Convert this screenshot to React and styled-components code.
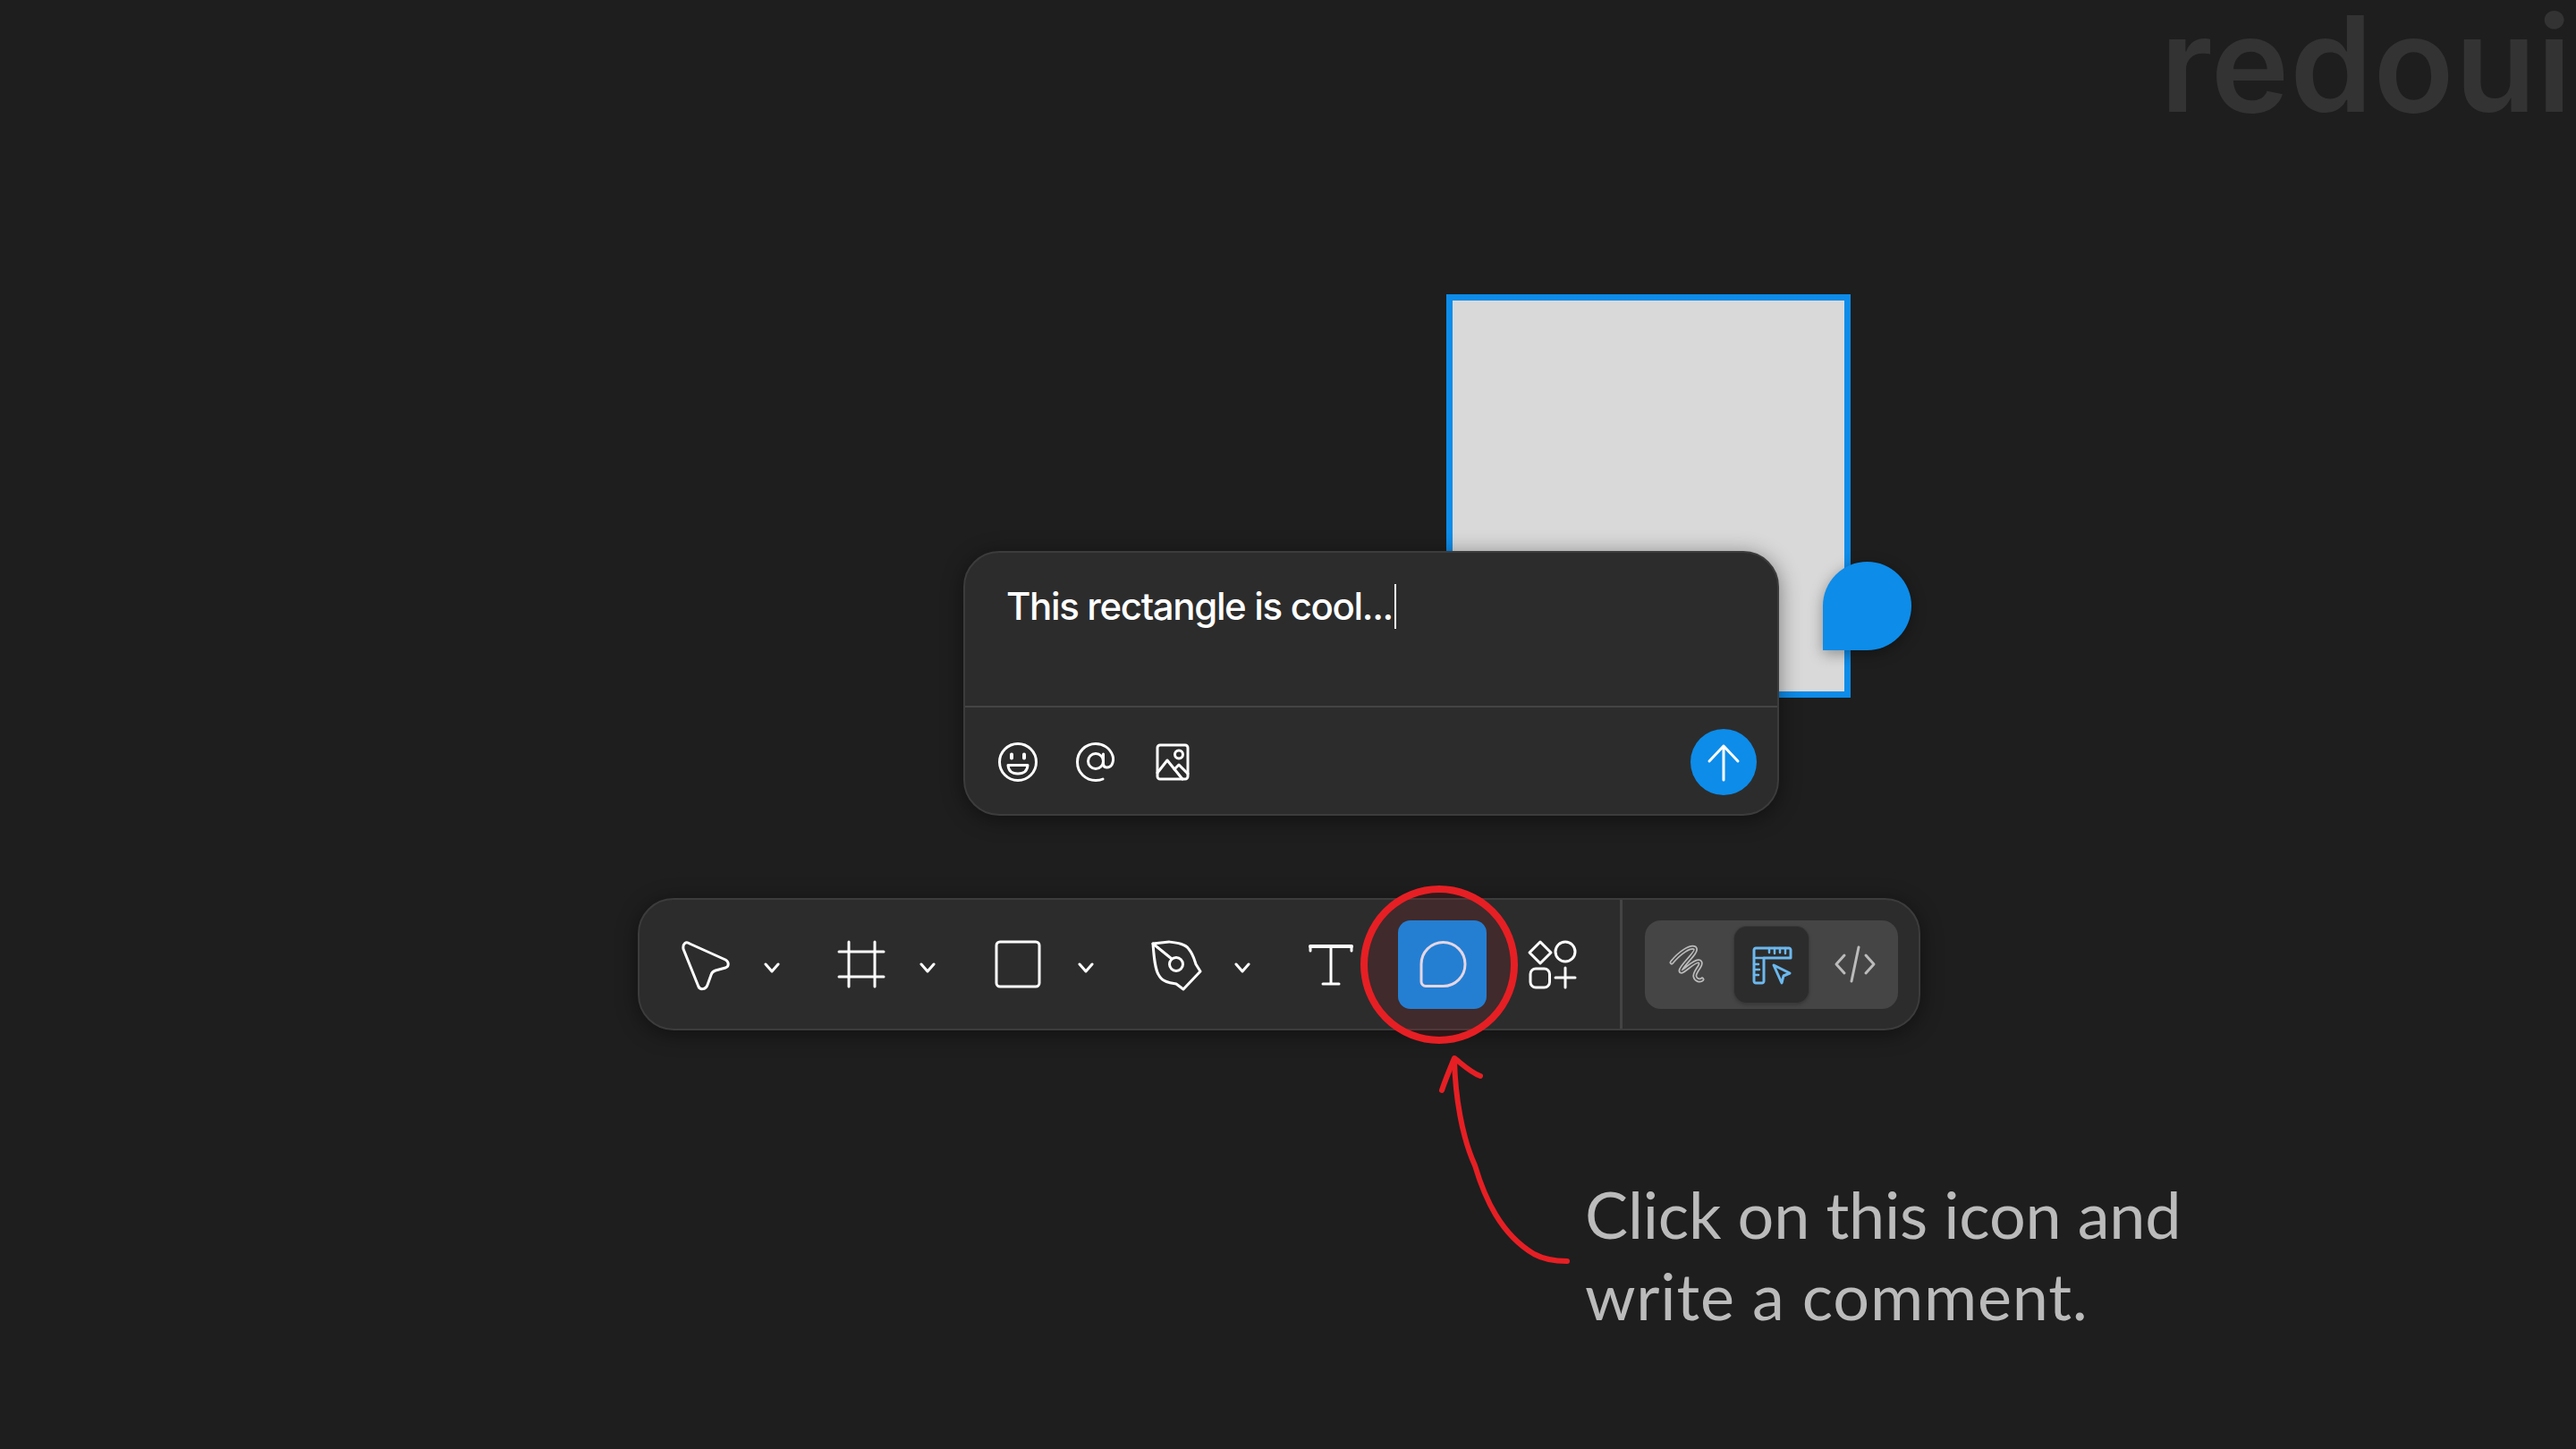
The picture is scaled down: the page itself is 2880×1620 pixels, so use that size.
import styled, { createGlobalStyle } from "styled-components"

const GlobalStyle = createGlobalStyle`
  html, body {
    margin: 0;
    padding: 0;
    background: #1e1e1e;
  }
`

const Page = styled.main`
  position: relative;
  width: 2880px;
  height: 1620px;
  overflow: hidden;
  padding-top: 329px;
  box-sizing: border-box;
  display: flex;
  flex-direction: column;
  align-items: flex-start;
  background: #1e1e1e;
`

const Watermark = styled.div`
  position: absolute;
  top: 2px;
  right: 4px;
  font-family: "Inter", sans-serif;
  font-weight: 600;
  font-size: 148px;
  line-height: 140px;
  letter-spacing: 1px;
  color: #333333;
`

const SelectedRect = styled.div`
  position: relative;
  box-sizing: border-box;
  margin-left: 1617px;
  width: 452px;
  height: 451px;
  background: #d9d9d9;
  border: 7px solid #0d8ce9;
`

const Pin = styled.div`
  position: absolute;
  left: 414px;
  top: 292px;
  width: 99px;
  height: 99px;
  background: #0d8ce9;
  border-radius: 50% 50% 50% 0;
  box-shadow: 0 4px 16px rgba(0, 0, 0, 0.35);
`

const CommentCard = styled.section`
  position: relative;
  box-sizing: border-box;
  margin-top: -164px;
  margin-left: 1077px;
  width: 912px;
  height: 296px;
  display: flex;
  flex-direction: column;
  background: #2c2c2c;
  border: 2px solid #3c3c3c;
  border-radius: 40px;
  box-shadow: 0 4px 24px rgba(0, 0, 0, 0.45);
`

const CommentBody = styled.div`
  height: 173px;
  box-sizing: border-box;
  padding: 35px 0 0 46px;
  display: flex;
  align-items: flex-start;
  border-bottom: 2px solid #444444;
`

const CommentText = styled.span`
  font-family: "Inter", sans-serif;
  font-weight: 500;
  font-size: 42px;
  line-height: 50px;
  letter-spacing: -1.35px;
  color: #ffffff;
`

const Caret = styled.span`
  width: 2px;
  height: 50px;
  margin-left: 2px;
  background: #ffffff;
`

const CommentFooter = styled.div`
  flex: 1;
  display: flex;
  align-items: center;
  padding: 3px 23px 0 35px;
  gap: 39px;
`

const Slot = styled.span`
  display: flex;
  width: 48px;
  height: 48px;
`

const SendButton = styled.button`
  margin-left: auto;
  width: 74px;
  height: 74px;
  padding: 0;
  border: 0;
  border-radius: 50%;
  background: #0d8ce9;
  display: flex;
  align-items: center;
  justify-content: center;
`

const Toolbar = styled.nav`
  position: relative;
  box-sizing: border-box;
  margin-top: 92px;
  margin-left: 713px;
  width: 1434px;
  height: 148px;
  padding-left: 43px;
  display: flex;
  align-items: center;
  background: #2c2c2c;
  border: 2px solid #3c3c3c;
  border-radius: 40px;
  box-shadow: 0 4px 24px rgba(0, 0, 0, 0.45);
`

const ToolGroup = styled.div`
  width: ${(p) => p.$w}px;
  flex: none;
  display: flex;
  align-items: center;
  gap: ${(p) => p.$gap || 36}px;
`

const ToolIcon = styled.span`
  width: 60px;
  height: 60px;
  flex: none;
  display: flex;
`

const ActiveTool = styled.button`
  width: 99px;
  height: 99px;
  padding: 0;
  margin-left: 46px;
  margin-right: 43px;
  border: 0;
  border-radius: 14px;
  background: #0d8ce9;
  display: flex;
  align-items: center;
  justify-content: center;
  flex: none;
`

const Divider = styled.div`
  align-self: stretch;
  width: 3px;
  flex: none;
  margin-left: 46px;
  background: #444444;
`

const ModeSwitch = styled.div`
  margin-left: 25px;
  box-sizing: border-box;
  width: 283px;
  height: 99px;
  padding: 7px;
  display: flex;
  gap: 10px;
  background: #454545;
  border-radius: 18px;
  flex: none;
`

const ModeItem = styled.div`
  width: 83px;
  border-radius: 14px;
  display: flex;
  align-items: center;
  justify-content: center;
  background: ${(p) => (p.$active ? "#2c2c2c" : "transparent")};
  box-shadow: ${(p) => (p.$active ? "0 0 0 1px #3a3a3a, 0 2px 4px rgba(0,0,0,.25)" : "none")};
`

const RedCircle = styled.svg`
  position: absolute;
  left: 799px;
  top: -23px;
  pointer-events: none;
`

const Hint = styled.section`
  margin-top: 23px;
  margin-left: 1600px;
  display: flex;
  align-items: flex-start;
`

const HintText = styled.p`
  margin: 137px 0 0 7px;
  font-family: "Lato", sans-serif;
  font-weight: 400;
  font-size: 72px;
  line-height: 91px;
  color: #bbbbbb;
  white-space: nowrap;
`

const HintLine = styled.span`
  display: block;
  letter-spacing: ${(p) => p.$spacing}px;
`

const Icon = ({ size = 60, color = "#fff", width = 3, children }) => (
  <svg
    width={size}
    height={size}
    viewBox={`0 0 ${size} ${size}`}
    fill="none"
    stroke={color}
    strokeWidth={width}
    strokeLinecap="round"
    strokeLinejoin="round"
  >
    {children}
  </svg>
)

const Chevron = () => (
  <svg width="18" height="14" viewBox="0 0 18 14" fill="none" stroke="#fff" strokeWidth="3" strokeLinecap="round" strokeLinejoin="round" style={{ marginTop: 8 }}>
    <path d="M2 3l7 8 7-8" />
  </svg>
)

const squiggle = "M11 28C20 17 32 9 37 12C41 16 22 31 21 37C21 43 37 24 42 27C47 30 35 39 37 44C38 48 43 49 45 47"

const tools = [
  {
    w: 175,
    gap: 36,
    icon: <path d="M6 13C5 7 9 4 13 7L53 25C57.500 27.500 57 33 53 34L42 37C39 38 37.500 40 37 42L33 53C31 59 24 59 22.500 54Z" />,
  },
  {
    w: 174,
    gap: 35,
    icon: (
      <>
        <path d="M16 5V55M45 5V55" />
        <path d="M5 16H55M5 44H55" />
      </>
    ),
  },
  {
    w: 178,
    gap: 38,
    icon: <rect x="7" y="5" width="48" height="50" rx="4" />,
  },
  {
    w: 172,
    gap: 35,
    icon: (
      <>
        <path d="M4 7L22 5C30 6 40 7 44 13C49 19 50 24 52 30L57 38L38 58L30 52C24 51 15 50 11 43C6 36 5 20 4 7Z" />
        <circle cx="30" cy="30" r="7.500" />
        <path d="M4 7L25 24" />
      </>
    ),
  },
]

const App = () => {
  return (
    <Page>
      <GlobalStyle />
      <Watermark>redoui</Watermark>

      <SelectedRect>
        <Pin />
      </SelectedRect>

      <CommentCard>
        <CommentBody>
          <CommentText>This rectangle is cool...</CommentText>
          <Caret />
        </CommentBody>
        <CommentFooter>
          <Slot>
            <Icon size={48} width={3}>
              <circle cx="24" cy="24" r="20.500" />
              <path d="M13 27.500H35C34.500 34 30 37 24 37C18 37 13.500 34 13 27.500Z" />
              <path d="M17 15.500V19.500M31 15.500V19.500" strokeWidth="4" />
            </Icon>
          </Slot>
          <Slot>
            <Icon size={48} width={3}>
              <circle cx="24" cy="23" r="8.500" />
              <path d="M32.500 15V26C32.500 31 39 31.500 42 27C44 23 44 20 43 17C40 8 32 3.500 24 3.500C12 3.500 3.500 13 3.500 24C3.500 36 13 44.500 24 44.500C27 44.500 30 44 32 43" />
            </Icon>
          </Slot>
          <Slot>
            <Icon size={48} width={3}>
              <rect x="6" y="5" width="34" height="38" rx="3" />
              <circle cx="30" cy="15.500" r="4.500" />
              <path d="M6 36L17 22L34 43" />
              <path d="M25 32L30 27L40 37" />
            </Icon>
          </Slot>
          <SendButton>
            <Icon size={48} width={3}>
              <path d="M24 44V6M8 23L24 6L40 23" />
            </Icon>
          </SendButton>
        </CommentFooter>
      </CommentCard>

      <Toolbar>
        {tools.map((tool) => (
          <ToolGroup key={tool.w} $w={tool.w} $gap={tool.gap}>
            <ToolIcon>
              <Icon>{tool.icon}</Icon>
            </ToolIcon>
            <Chevron />
          </ToolGroup>
        ))}
        <ToolIcon>
          <Icon>
            <path d="M8 15V10H54V15M31 10V52M22 52H40" />
            <path d="M8 10H54" strokeWidth="4" />
          </Icon>
        </ToolIcon>
        <ActiveTool>
          <Icon color="#e6eefa">
            <path d="M6 30A24.500 24.500 0 1 1 30.500 54.500H11A5 5 0 0 1 6 49.500Z" />
          </Icon>
        </ActiveTool>
        <ToolIcon>
          <Icon>
            <path d="M17 5L29 17L17 29L5 17Z" />
            <circle cx="45" cy="16" r="11" />
            <rect x="6" y="35" width="21.500" height="21" rx="6" />
            <path d="M45 34V56M34 45H56" />
          </Icon>
        </ToolIcon>
        <Divider />
        <ModeSwitch>
          <ModeItem>
            <Icon>
              <path d={squiggle} stroke="#bbbbbb" strokeWidth="5" />
              <path d={squiggle} stroke="#454545" strokeWidth="1.500" />
            </Icon>
          </ModeItem>
          <ModeItem $active>
            <Icon color="#6cb8ee">
              <path d="M10 14C10 13 11 12 12 12H49C50 12 51 13 51 14V23H21V49C21 50 20 51 19 51H12C11 51 10 50 10 49Z" />
              <path d="M21 23L10 23M27 12V17M33 12V18M39 12V17M45 12V18M10 30H15M10 36H16M10 42H15" strokeWidth="2.500" />
              <path d="M32 31L50 40L43 43L41 51Z" />
            </Icon>
          </ModeItem>
          <ModeItem>
            <Icon color="#bbbbbb">
              <path d="M18 20L9 30L18 40M42 20L51 30L42 40M34 11L26 49" />
            </Icon>
          </ModeItem>
        </ModeSwitch>
        <RedCircle width="190" height="190" viewBox="0 0 190 190">
          <ellipse cx="95" cy="95.500" rx="84" ry="84.500" fill="rgba(230, 30, 35, 0.11)" stroke="#e61f24" strokeWidth="8" />
        </RedCircle>
      </Toolbar>

      <Hint>
        <svg width="165" height="245" viewBox="0 0 165 245" fill="none" stroke="#e61f24" strokeWidth="6" strokeLinecap="round" strokeLinejoin="round">
          <path d="M26 10C27 50 34 95 49 128C60 165 78 205 115 227C126 233 140 235 152 235" />
          <path d="M12 44C16 32 21 20 26 8C34 14 44 24 55 28" />
        </svg>
        <HintText>
          <HintLine $spacing={-0.2}>Click on this icon and</HintLine>
          <HintLine $spacing={0.8}>write a comment.</HintLine>
        </HintText>
      </Hint>
    </Page>
  )
}

export default App
